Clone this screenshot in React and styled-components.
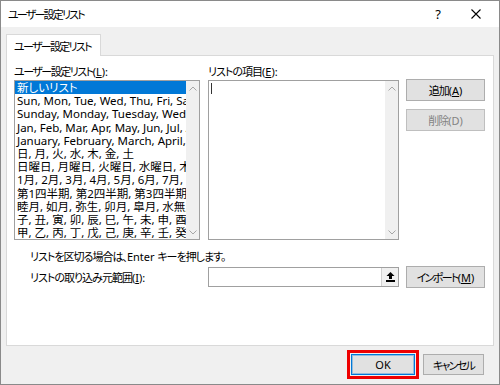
import styled, { createGlobalStyle } from "styled-components";

const GlobalStyle = createGlobalStyle`
  html, body {
    margin: 0;
    padding: 0;
    background: #f0f0f0;
  }
  body {
    font-family: "Noto Sans", "Noto Sans CJK JP", sans-serif;
    font-size: 11px;
    color: #000;
  }
`;

const Window = styled.div`
  box-sizing: border-box;
  width: 500px;
  height: 385px;
  border: 1px solid #8a8a8a;
  background: #f0f0f0;
  display: flex;
  flex-direction: column;
  font-feature-settings: "palt";
  letter-spacing: -1px;
`;

const TitleBar = styled.div`
  height: 26px;
  background: #fff;
  display: flex;
  align-items: center;
  padding-left: 7px;
  padding-right: 1px;
`;

const Title = styled.div`
  flex: 1;
  letter-spacing: -1.8px;
`;

const TitleButton = styled.div`
  width: ${(p) => p.w}px;
  height: 26px;
  display: flex;
  align-items: center;
  justify-content: center;
  font-size: 13px;
  letter-spacing: 0;
`;

const Body = styled.div`
  flex: 1;
  display: flex;
  flex-direction: column;
  padding: 7px 5px 0 5px;
`;

const Tab = styled.div`
  box-sizing: border-box;
  width: 95px;
  height: 22px;
  border: 1px solid #d9d9d9;
  border-bottom: none;
  background: #fff;
  padding-left: 7px;
  display: flex;
  align-items: center;
  white-space: nowrap;
  letter-spacing: -1.7px;
  margin-bottom: -1px;
  position: relative;
  z-index: 1;
`;

const Panel = styled.div`
  box-sizing: border-box;
  height: 291px;
  border: 1px solid #d9d9d9;
  background: #fff;
  padding: 8px 0 0 7px;
  display: flex;
  flex-direction: column;
`;

const TopRow = styled.div`
  display: flex;
  align-items: flex-start;
`;

const Column = styled.div`
  width: ${(p) => p.w}px;
  margin-right: ${(p) => p.gap || 0}px;
  display: flex;
  flex-direction: column;
`;

const Label = styled.div`
  height: 16px;
  line-height: 16px;
  white-space: nowrap;
  letter-spacing: ${(p) => (p.tight ? -1.5 : -1)}px;
`;

// latin runs keep their natural spacing, only the kana/kanji are tightened
const Latin = styled.span`
  letter-spacing: 0;
`;

const Key = styled.u`
  letter-spacing: 0;
  text-underline-offset: 1px;
`;

const Box = styled.div`
  box-sizing: border-box;
  height: 160px;
  border: 1px solid #a0a0a0;
  background: #fff;
  display: flex;
  overflow: hidden;
`;

const ListItems = styled.div`
  flex: 1;
  min-width: 0;
  overflow: hidden;
`;

const Item = styled.div`
  height: 13.2px;
  line-height: 13.2px;
  padding-left: 2px;
  white-space: nowrap;
  font-size: 11.5px;
  letter-spacing: 0;
  background: ${(p) => (p.selected ? "#0078d7" : "transparent")};
  color: ${(p) => (p.selected ? "#fff" : "#000")};
`;

const EditArea = styled.div`
  flex: 1;
  padding: 2px 0 0 2px;
`;

const Caret = styled.div`
  width: 1px;
  height: 11px;
  background: #333;
`;

const ScrollBar = styled.div`
  width: 13px;
  background: #f0f0f0;
  display: flex;
  flex-direction: column;
  justify-content: space-between;
  align-items: center;
  padding: 5px 0 4px;
`;

const ButtonColumn = styled.div`
  display: flex;
  flex-direction: column;
  gap: 8px;
  padding-top: 15px;
`;

const Button = styled.button`
  box-sizing: border-box;
  width: ${(p) => p.w || 79}px;
  height: ${(p) => p.h || 22}px;
  padding: 0;
  border: 1px solid ${(p) => (p.disabled ? "#bfbfbf" : p.primary ? "#0078d7" : "#adadad")};
  background: #e1e1e1;
  color: ${(p) => (p.disabled ? "#838383" : "#000")};
  font-family: inherit;
  font-size: 11px;
  font-feature-settings: "palt";
  letter-spacing: ${(p) => (p.tight ? -1.7 : -1)}px;
  display: flex;
  align-items: center;
  justify-content: center;
  box-shadow: ${(p) => (p.primary ? "inset 0 0 0 1px rgba(0, 120, 215, 0.35)" : "none")};
  outline: ${(p) => (p.marked ? "3px solid #ee0000" : "none")};
  outline-offset: 1px;
`;

const Hint = styled.div`
  margin-top: 9px;
  padding-left: 16px;
  height: 15px;
  line-height: 15px;
  white-space: nowrap;
`;

const ImportRow = styled.div`
  display: flex;
  align-items: center;
  margin-top: 2px;
  height: 22px;
`;

const ImportLabel = styled.div`
  width: 178px;
  padding-left: 16px;
  white-space: nowrap;
`;

const RangeInput = styled.div`
  box-sizing: border-box;
  width: 191px;
  height: 20px;
  border: 1px solid #a0a0a0;
  background: #fff;
  display: flex;
  justify-content: flex-end;
  margin-right: 7px;
`;

const CollapseButton = styled.div`
  width: 16px;
  background: #f0f0f0;
  border-left: 1px solid #d0d0d0;
  display: flex;
  align-items: center;
  justify-content: center;
`;

const Footer = styled.div`
  display: flex;
  justify-content: flex-end;
  align-items: flex-start;
  gap: 8px;
  padding: 8px 10px 0 0;
`;

const ChevronUp = () => (
  <svg width="8" height="5" viewBox="0 0 8 5">
    <path d="M0.5 4.5 L4 1 L7.5 4.5" fill="none" stroke="#a6a6a6" strokeWidth="1" />
  </svg>
);

const ChevronDown = () => (
  <svg width="8" height="5" viewBox="0 0 8 5">
    <path d="M0.5 0.5 L4 4 L7.5 0.5" fill="none" stroke="#a6a6a6" strokeWidth="1" />
  </svg>
);

const CloseIcon = () => (
  <svg width="10" height="10" viewBox="0 0 10 10">
    <path d="M0.5 0.5 L9.5 9.5 M9.5 0.5 L0.5 9.5" stroke="#000" strokeWidth="1.1" />
  </svg>
);

const CollapseIcon = () => (
  <svg width="9" height="10" viewBox="0 0 9 10">
    <path d="M4.5 0 L8.5 4 L6 4 L6 7 L3 7 L3 4 L0.5 4 Z" fill="#000" />
    <rect x="0" y="8" width="9" height="2" fill="#000" />
  </svg>
);

const lists = [
  "新しいリスト",
  "Sun, Mon, Tue, Wed, Thu, Fri, Sat",
  "Sunday, Monday, Tuesday, Wednesday, Thursday, Friday, Saturday",
  "Jan, Feb, Mar, Apr, May, Jun, Jul, Aug, Sep, Oct, Nov, Dec",
  "January, February, March, April, May, June, July, August, September, October, November, December",
  "日, 月, 火, 水, 木, 金, 土",
  "日曜日, 月曜日, 火曜日, 水曜日, 木曜日, 金曜日, 土曜日",
  "1月, 2月, 3月, 4月, 5月, 6月, 7月, 8月, 9月, 10月, 11月, 12月",
  "第1四半期, 第2四半期, 第3四半期, 第4四半期",
  "睦月, 如月, 弥生, 卯月, 皐月, 水無月, 文月, 葉月, 長月, 神無月, 霜月, 師走",
  "子, 丑, 寅, 卯, 辰, 巳, 午, 未, 申, 酉, 戌, 亥",
  "甲, 乙, 丙, 丁, 戊, 己, 庚, 辛, 壬, 癸",
];

export default function App() {
  return (
    <>
      <GlobalStyle />
      <Window>
        <TitleBar>
          <Title>ユーザー設定リスト</Title>
          <TitleButton w={30}>?</TitleButton>
          <TitleButton w={45}>
            <CloseIcon />
          </TitleButton>
        </TitleBar>

        <Body>
          <Tab>ユーザー設定リスト</Tab>
          <Panel>
            <TopRow>
              <Column w={186} gap={8}>
                <Label tight>
                  ユーザー設定リスト<Latin>(<Key>L</Key>):</Latin>
                </Label>
                <Box>
                  <ListItems>
                    {lists.map((text, i) => (
                      <Item key={i} selected={i === 0}>
                        {text}
                      </Item>
                    ))}
                  </ListItems>
                  <ScrollBar>
                    <ChevronUp />
                    <ChevronDown />
                  </ScrollBar>
                </Box>
              </Column>

              <Column w={191} gap={7}>
                <Label>
                  リストの項目<Latin>(<Key>E</Key>):</Latin>
                </Label>
                <Box>
                  <EditArea>
                    <Caret />
                  </EditArea>
                  <ScrollBar>
                    <ChevronUp />
                    <ChevronDown />
                  </ScrollBar>
                </Box>
              </Column>

              <ButtonColumn>
                <Button>
                  追加<Latin>(<Key>A</Key>)</Latin>
                </Button>
                <Button disabled>
                  削除<Latin>(D)</Latin>
                </Button>
              </ButtonColumn>
            </TopRow>

            <Hint>
              リストを区切る場合は、<Latin>Enter </Latin>キーを押します。
            </Hint>

            <ImportRow>
              <ImportLabel>
                リストの取り込み元範囲<Latin>(<Key>I</Key>):</Latin>
              </ImportLabel>
              <RangeInput>
                <CollapseButton>
                  <CollapseIcon />
                </CollapseButton>
              </RangeInput>
              <Button tight>
                インポート<Latin>(<Key>M</Key>)</Latin>
              </Button>
            </ImportRow>
          </Panel>

          <Footer>
            <Button w={64} h={21} primary marked>
              <Latin>OK</Latin>
            </Button>
            <Button w={61} h={21} tight>
              キャンセル
            </Button>
          </Footer>
        </Body>
      </Window>
    </>
  );
}
